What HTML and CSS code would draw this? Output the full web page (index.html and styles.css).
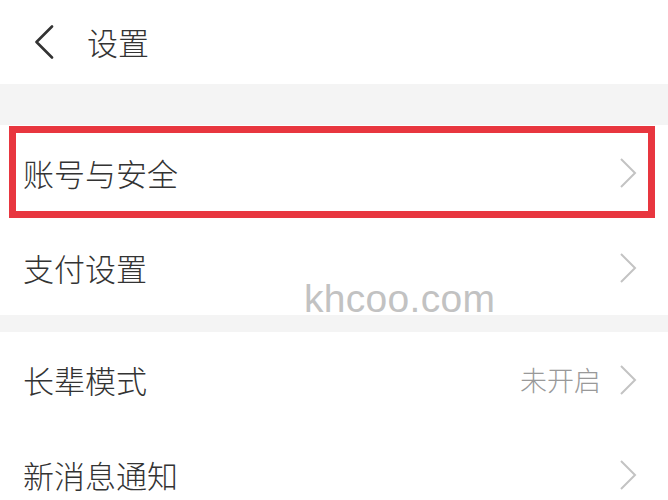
FILE: index.html
```html
<!DOCTYPE html>
<html lang="zh-CN">
<head>
<meta charset="utf-8">
<link rel="stylesheet" href="styles.css">
</head>
<body>
<div class="page">
  <header class="topbar">
    <svg class="back" width="20" height="34" viewBox="0 0 20 34"><path d="M18 1.5 L2.5 17 L18 32.5" fill="none" stroke="#333" stroke-width="2.6" stroke-linecap="round" stroke-linejoin="round"/></svg>
    <span class="title">设置</span>
  </header>
  <div class="band band-top"></div>
  <section class="group">
    <div class="row highlighted">
      <span class="label">账号与安全</span>
      <span class="right"><svg class="chev" width="18" height="32" viewBox="0 0 18 32"><path d="M2 2 L16 16 L2 30" fill="none" stroke="#c3c3c3" stroke-width="2"/></svg></span>
    </div>
    <div class="row">
      <span class="label">支付设置</span>
      <span class="right"><svg class="chev" width="18" height="32" viewBox="0 0 18 32"><path d="M2 2 L16 16 L2 30" fill="none" stroke="#c3c3c3" stroke-width="2"/></svg></span>
    </div>
  </section>
  <div class="band band-mid"></div>
  <section class="group">
    <div class="row">
      <span class="label">长辈模式</span>
      <span class="right"><span class="value">未开启</span><svg class="chev" width="18" height="32" viewBox="0 0 18 32"><path d="M2 2 L16 16 L2 30" fill="none" stroke="#c3c3c3" stroke-width="2"/></svg></span>
    </div>
    <div class="row">
      <span class="label">新消息通知</span>
      <span class="right"><svg class="chev" width="18" height="32" viewBox="0 0 18 32"><path d="M2 2 L16 16 L2 30" fill="none" stroke="#c3c3c3" stroke-width="2"/></svg></span>
    </div>
  </section>
  <div class="watermark">khcoo.com</div>
</div>
</body>
</html>
```

FILE: styles.css
```css
* { box-sizing: border-box; }
html, body { margin: 0; padding: 0; background: #ffffff; }
body {
  font-family: "Noto Sans CJK SC", "Noto Sans", sans-serif;
  font-weight: 300;
  color: #333333;
  overflow: hidden;
}
.page {
  position: relative;
  width: 668px;
  height: 500px;
  overflow: hidden;
}
.topbar {
  height: 84px;
  display: flex;
  align-items: center;
  padding-left: 34px;
  background: #ffffff;
}
.back { display: block; margin-top: -1px; }
.title {
  margin-left: 33px;
  font-size: 31px;
  line-height: 1;
  color: #333;
  margin-top: -2px;
}
.band { background: #f4f4f4; }
.band-top { height: 41px; }
.band-mid { height: 17px; }
.group { background: #ffffff; }
.row {
  position: relative;
  height: 95px;
  display: flex;
  align-items: center;
  justify-content: space-between;
  padding-left: 23px;
  padding-right: 31px;
}
.label {
  font-size: 31px;
  line-height: 1;
  color: #333;
}
.right {
  display: flex;
  align-items: center;
}
.value {
  font-size: 27px;
  line-height: 1;
  color: #999;
  margin-right: 18px;
}
.chev { display: block; }
.highlighted::after {
  content: "";
  position: absolute;
  left: 9px;
  right: 13px;
  top: 1px;
  bottom: 2px;
  border: 7px solid #e8363f;
  pointer-events: none;
}
.watermark {
  position: absolute;
  left: 304px;
  top: 279px;
  font-family: "Liberation Sans", Arial, sans-serif;
  font-weight: 400;
  font-size: 39px;
  line-height: 1;
  color: #c2c2c2;
  letter-spacing: 0.3px;
}
```
